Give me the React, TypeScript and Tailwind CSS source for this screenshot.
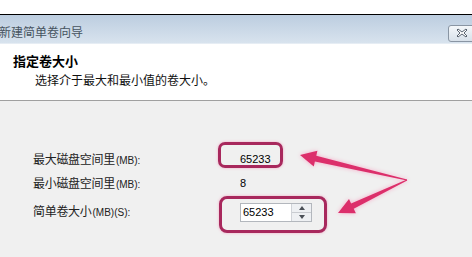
import React from "react";

const cjk = { fontFamily: '"Noto Sans CJK SC", "Noto Sans", sans-serif' };
const latin = { fontFamily: '"Liberation Sans", Arial, sans-serif' };

function CloseButton() {
  return (
    <div className="w-[27px] h-[17px] mr-[-3px] rounded-[3px] border border-[#8995a3] bg-gradient-to-b from-[#f4f7fa] to-[#d8e1ea] flex items-center justify-center">
      <svg width="12" height="10" viewBox="0 0 12 10">
        <path d="M2 1 L6 4 L10 1 L11 2 L8 5 L11 8 L10 9 L6 6 L2 9 L1 8 L4 5 L1 2 Z" fill="#ffffff" stroke="#5a6470" strokeWidth="1" />
      </svg>
    </div>
  );
}

function Spinner() {
  return (
    <div className="w-[20px] h-full flex flex-col border-l border-[#d0d3d8] bg-[#eef0f3]">
      <div className="flex-1 flex items-center justify-center border-b border-[#c9ccd1]">
        <svg width="6" height="4" viewBox="0 0 6 4"><path d="M0 4 L3 0 L6 4 Z" fill="#4a4f57" /></svg>
      </div>
      <div className="flex-1 flex items-center justify-center">
        <svg width="6" height="4" viewBox="0 0 6 4"><path d="M0 0 L6 0 L3 4 Z" fill="#4a4f57" /></svg>
      </div>
    </div>
  );
}

function Label({ cn, suffix }: { cn: string; suffix: string }) {
  return (
    <span className="pl-[33px] w-[240px] flex items-baseline">
      <span className="text-[12px] tracking-[-0.3px]">{cn}</span>
      <span className="text-[10px] ml-[1px]" style={latin}>{suffix}</span>
    </span>
  );
}

export default function App() {
  return (
    <div className="relative w-[472px] h-[257px] overflow-hidden bg-white flex flex-col" style={cjk}>
      <div className="h-[14px] bg-white shrink-0" />
      <div className="h-[1px] bg-black shrink-0" />
      {/* title bar */}
      <div className="h-[29px] shrink-0 bg-gradient-to-b from-[#bccde0] to-[#d8e3ee] border-b border-[#e6edf4] flex items-center justify-between">
        <span className="ml-[-1px] text-[12px] leading-none text-[#46535f] mt-[6px]">新建简单卷向导</span>
        <div className="mt-[8px]">
          <CloseButton />
        </div>
      </div>
      {/* header */}
      <div className="h-[56px] shrink-0 bg-white pl-[13px] pt-[9px]">
        <div className="text-[13px] leading-[16px] font-bold text-black">指定卷大小</div>
        <div className="pl-[22px] mt-[3px] text-[12px] leading-[16px] text-[#111]">选择介于最大和最小值的卷大小。</div>
      </div>
      <div className="h-[1px] bg-[#a0a0a0] shrink-0" />
      {/* body */}
      <div className="flex-1 bg-[#f0f0f0] flex flex-col text-[12px] text-[#222]">
        <div className="mt-[47px] h-[22px] flex items-center">
          <Label cn="最大磁盘空间里" suffix="(MB):" />
          <span className="text-[11px] text-black" style={latin}>65233</span>
        </div>
        <div className="mt-[2px] h-[22px] flex items-center">
          <Label cn="最小磁盘空间里" suffix="(MB):" />
          <span className="text-[11px] text-black" style={latin}>8</span>
        </div>
        <div className="mt-[4px] h-[26px] flex items-center">
          <Label cn="简单卷大小" suffix="(MB)(S):" />
          <div className="mt-[3px] w-[72px] h-[19px] bg-white border border-[#b3b7bd] flex items-stretch">
            <span className="flex-1 pl-[2px] text-[11px] leading-[17px] text-black" style={latin}>65233</span>
            <Spinner />
          </div>
        </div>
      </div>

      {/* annotation highlights */}
      <div className="absolute left-[218px] top-[142px] w-[65px] h-[26px] rounded-[7px] border-[3px] border-[#a8285d] shadow-[0_0_3px_#f3a6c4]" />
      <div className="absolute left-[219px] top-[196px] w-[108px] h-[37px] rounded-[8px] border-[3px] border-[#a8285d] shadow-[0_0_3px_#f3a6c4]" />
      <svg className="absolute left-0 top-0 drop-shadow-[0_0_2px_#f7a8c6]" width="472" height="257" viewBox="0 0 472 257">
        <polygon points="407.1,179.4 316.3,155.7 317.4,150.8 300,155 313.8,166.4 314.9,161.5 406.9,180.6" fill="#dc2f6b" />
        <polygon points="406.8,179.4 351.1,203.4 349,198.9 338,213 355.9,213.3 353.7,208.8 407.2,180.6" fill="#dc2f6b" />
      </svg>
    </div>
  );
}
